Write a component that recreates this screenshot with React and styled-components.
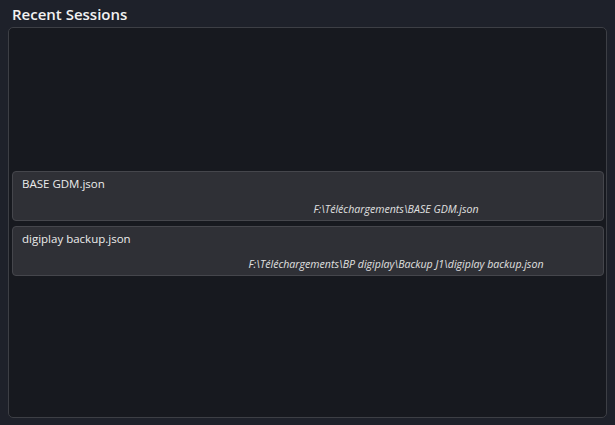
import React from "react";
import styled, { createGlobalStyle } from "styled-components";

const Global = createGlobalStyle`
  html, body { margin: 0; padding: 0; background: #1e212a; }
  body { font-family: "Open Sans", "Noto Sans", sans-serif; }
  * { box-sizing: border-box; }
`;

const Page = styled.div`
  height: 425px;
  padding: 4px 8px 7px 8px;
  display: flex;
  flex-direction: column;
  background: #1e212a;
`;

const Title = styled.h2`
  margin: 0 0 3px 0;
  padding-left: 4px;
  font-size: 15px;
  line-height: 20px;
  font-weight: 600;
  color: #f2f2f2;
`;

const Panel = styled.div`
  flex: 1;
  border: 1px solid #3d3f45;
  border-radius: 5px;
  background: #17191f;
  display: flex;
  flex-direction: column;
  justify-content: center;
  gap: 5px;
  padding: 2px 2px 0 3px;
`;

const Row = styled.div`
  height: 50px;
  border: 1px solid #45464c;
  border-radius: 4px;
  background: #2f3036;
  padding: 4px 9px 0 9px;
  display: flex;
  flex-direction: column;
`;

const Name = styled.div`
  font-size: 11.5px;
  line-height: 16px;
  color: #ececec;
  white-space: nowrap;
`;

const Path = styled.div`
  margin-top: 9.5px;
  margin-left: ${(p) => p.$offset}px;
  text-align: center;
  font-size: 10.6px;
  line-height: 14px;
  font-style: italic;
  color: #e0e0e0;
  white-space: nowrap;
`;

const sessions = [
  { name: "BASE GDM.json", path: "F:\\Téléchargements\\BASE GDM.json" },
  {
    name: "digiplay backup.json",
    path: "F:\\Téléchargements\\BP digiplay\\Backup J1\\digiplay backup.json",
  },
];

export default function App() {
  return (
    <>
      <Global />
      <Page>
        <Title>Recent Sessions</Title>
        <Panel>
          {sessions.map((s) => (
            <Row key={s.name}>
              <Name>{s.name}</Name>
              <Path $offset={176}>{s.path}</Path>
            </Row>
          ))}
        </Panel>
      </Page>
    </>
  );
}
